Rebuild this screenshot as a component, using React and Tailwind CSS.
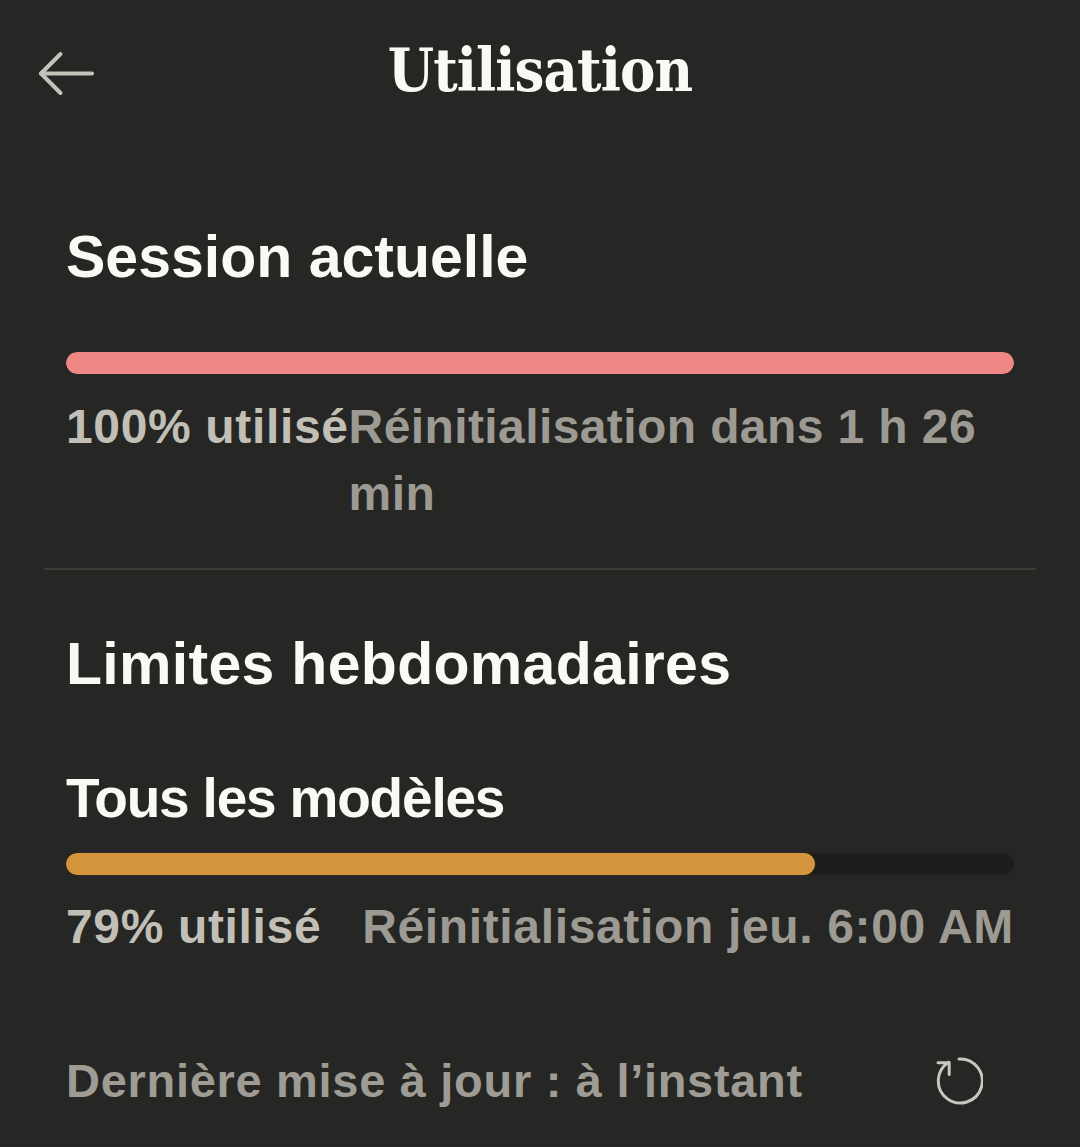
import React from "react";

const sans = "font-['Liberation_Sans',Arial,sans-serif]";

function ArrowBack() {
  return (
    <svg width="60" height="48" viewBox="0 0 60 48" fill="none" stroke="#c4c2ba" strokeWidth="4" strokeLinecap="round" strokeLinejoin="round">
      <path d="M5 23.5 H56" />
      <path d="M24.5 4 L5 23.5 L24.5 43" />
    </svg>
  );
}

function RefreshIcon() {
  return (
    <svg width="48" height="48" viewBox="0 0 48 48" fill="none" stroke="#c8c6be" strokeWidth="3" strokeLinecap="round" strokeLinejoin="round">
      <path d="M24 2 A22 22 0 1 1 13.8 5.2" />
      <path d="M3 5.8 H14.2 V17.5" />
    </svg>
  );
}

function UsageBar({ percent, color }) {
  return (
    <div className="h-[22px] w-full rounded-full bg-[#1e1d1c] overflow-hidden">
      <div className={`h-full rounded-full ${color}`} style={{ width: `${percent}%` }} />
    </div>
  );
}

export default function App() {
  return (
    <div className={`min-h-[1147px] w-[1080px] bg-[#262624] ${sans}`}>
      {/* Header */}
      <div className="grid grid-cols-[1fr_auto_1fr] items-center pt-[31px] h-[111px]">
        <div className="pl-[36px] mt-[5px]">
          <ArrowBack />
        </div>
        <h1 className="font-['DejaVu_Serif_Condensed','DejaVu_Serif',serif] font-bold text-[59px] leading-[80px] tracking-[-0.9px] text-[#faf9f5]">
          Utilisation
        </h1>
        <div />
      </div>

      {/* Session actuelle */}
      <div className="px-[66px]">
        <h2 className="mt-[110px] text-[59px] leading-[72px] font-bold text-[#faf9f5]">
          Session actuelle
        </h2>
        <div className="mt-[59px]">
          <UsageBar percent={100} color="bg-[#ef8784]" />
        </div>
        <div className="mt-[19px] flex justify-between text-[48px] leading-[67px] font-bold tracking-[0.4px]">
          <span className="text-[#c2c0b6] whitespace-nowrap tracking-[0.65px]">100% utilisé</span>
          <span className="text-[#9c9a92]">Réinitialisation dans 1 h 26 min</span>
        </div>
      </div>

      <div className="mx-[44px] mt-[41px] h-[2px] bg-[#3d3c39]" />

      {/* Limites hebdomadaires */}
      <div className="px-[66px]">
        <h2 className="mt-[58px] text-[59px] leading-[72px] font-bold tracking-[0.3px] text-[#faf9f5]">
          Limites hebdomadaires
        </h2>
        <h3 className="mt-[65px] text-[55px] leading-[66px] font-bold tracking-[-1.2px] text-[#faf9f5]">
          Tous les modèles
        </h3>
        <div className="mt-[22px]">
          <UsageBar percent={79} color="bg-[#d4943c]" />
        </div>
        <div className="mt-[18px] flex justify-between text-[48px] leading-[67px] font-bold tracking-[0.65px]">
          <span className="text-[#c2c0b6] whitespace-nowrap">79% utilisé</span>
          <span className="text-[#9c9a92]">Réinitialisation jeu. 6:00 AM</span>
        </div>

        {/* Footer */}
        <div className="mt-[88px] flex items-center justify-between">
          <span className="text-[47px] leading-[66px] font-bold tracking-[0.7px] text-[#9e9c94]">
            Dernière mise à jour : à l’instant
          </span>
          <button className="mr-[31px]">
            <RefreshIcon />
          </button>
        </div>
      </div>
    </div>
  );
}
